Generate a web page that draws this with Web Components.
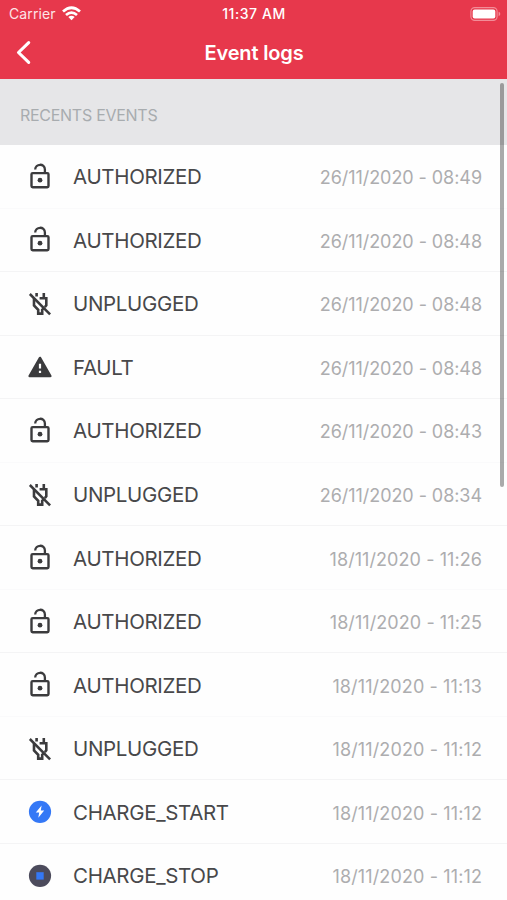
<!DOCTYPE html>
<html lang="en">
<head>
<meta charset="utf-8">
<title>Event logs</title>
<style>
body {
	margin: 0;
	height: 900px;
	overflow: hidden;
	background: #fefefe;
	font-family: Inter, "Liberation Sans", sans-serif;
}
event-row {
	--separator: #f4f4f5;
}
event-row:nth-of-type(1), event-row:nth-of-type(5), event-row:nth-of-type(7), event-row:nth-of-type(9) {
	--separator: #fafafb;
}
</style>
</head>
<body>
<event-screen>
	<status-bar slot="header" carrier="Carrier">11:37 AM</status-bar>
	<nav-bar slot="header">Event logs</nav-bar>
	<section-header>RECENTS EVENTS</section-header>
</event-screen>

<script>
// Icons share a 30x30 grid
const ICONS = {
	authorized: `
<rect x="6.5" y="11.1" width="17" height="14.2" rx="1.2" fill="none" stroke="#3b3b3d" stroke-width="2.4"/>
<path d="M10.2 7.6C10.2 1.2 19.9 1.2 19.9 7.4V11" fill="none" stroke="#3b3b3d" stroke-width="2.3"/>
<circle cx="15" cy="18.2" r="2.4" fill="#3b3b3d"/>`,
	unplugged: `
<path d="M4.8 5L25.1 25.3" fill="none" stroke="#3b3b3d" stroke-width="2.5"/>
<path d="M11.6 4V7.4M18.8 4V9.2M14.6 9.3H21.3V16.4L19.8 18.2M9 9.6V16.4L13.2 20.8V24.6H17.2V20.8L18.4 19.6" fill="none" stroke="#3b3b3d" stroke-width="2.6"/>`,
	fault: `
<path d="M15 5.9L25.4 24H4.6Z" fill="#3b3b3d" stroke="#3b3b3d" stroke-width="2.4" stroke-linejoin="round"/>
<path d="M15 11.8V16.5M15 18.7V21" stroke="#fff" stroke-width="2.2"/>`,
	start: `
<circle cx="15" cy="14.8" r="11.1" fill="#3478f6"/>
<path d="M16.6 8.6L10.8 15.6H14.2L13.3 20.8L19.2 13.6H15.8Z" fill="#fff"/>`,
	stop: `
<circle cx="15" cy="14.8" r="11.1" fill="#4c4b5c"/>
<rect x="11.3" y="11.2" width="7.4" height="7.4" fill="#3478f6"/>`,
};

const EVENTS = [
	["authorized", "AUTHORIZED", "26/11/2020 - 08:49"],
	["authorized", "AUTHORIZED", "26/11/2020 - 08:48"],
	["unplugged", "UNPLUGGED", "26/11/2020 - 08:48"],
	["fault", "FAULT", "26/11/2020 - 08:48"],
	["authorized", "AUTHORIZED", "26/11/2020 - 08:43"],
	["unplugged", "UNPLUGGED", "26/11/2020 - 08:34"],
	["authorized", "AUTHORIZED", "18/11/2020 - 11:26"],
	["authorized", "AUTHORIZED", "18/11/2020 - 11:25"],
	["authorized", "AUTHORIZED", "18/11/2020 - 11:13"],
	["unplugged", "UNPLUGGED", "18/11/2020 - 11:12"],
	["start", "CHARGE_START", "18/11/2020 - 11:12"],
	["stop", "CHARGE_STOP", "18/11/2020 - 11:12"],
];

class EventScreen extends HTMLElement{

	connectedCallback(){

		this.attachShadow({mode: "open"}).innerHTML = `
<style>
:host {
	display: block;
	position: relative;
	height: 900px;
	overflow: hidden;
}
header {
	height: 79px;
	background: #e7384c;
	color: #fff;
}
.scrollbar {
	position: absolute;
	top: 83px;
	right: 3px;
	width: 4px;
	height: 404px;
	border-radius: 2px;
	background: rgba(0, 0, 0, .33);
}
</style>
<header><slot name="header"></slot></header>
<slot></slot>
<div class="scrollbar"></div>
		`;

	}

}

class StatusBar extends HTMLElement{

	connectedCallback(){

		this.attachShadow({mode: "open"}).innerHTML = `
<style>
:host {
	display: grid;
	grid-template-columns: 1fr auto 1fr;
	align-items: center;
	height: 27px;
	padding: 0 6px 0 9px;
	font-size: 14px;
}
.carrier {
	display: flex;
	align-items: center;
	gap: 6px;
	color: #fde4e7;
	letter-spacing: .1px;
}
.time {
	font-size: 14px;
	font-weight: 500;
	letter-spacing: .55px;
	margin-right: 2px;
}
.battery {
	justify-self: end;
}
svg {
	display: block;
}
</style>
<div class="carrier">
	<span>${this.getAttribute("carrier")}</span>
	<svg width="19" height="15" viewBox="0 0 19 15" fill="none" stroke="#fff" stroke-width="2.7">
		<path d="M1 5.6Q9.5 -2.1 18 5.6M4 9Q9.5 4.2 15 9"/>
		<path d="M6.3 11Q9.5 8.5 12.7 11L9.5 14.3Z" fill="#fff" stroke="none"/>
	</svg>
</div>
<div class="time"><slot></slot></div>
<svg class="battery" width="31" height="14" viewBox="0 0 31 14">
	<rect x=".9" y=".6" width="26.2" height="12.8" rx="3.8" fill="none" stroke="#f28d98" stroke-width="1.1"/>
	<rect x="2.7" y="2.4" width="22.6" height="9.2" rx="2" fill="#fff"/>
	<path d="M28.6 4.8Q30.3 5.4 30.3 7T28.6 9.2Z" fill="#f28d98"/>
</svg>
		`;

	}

}

class NavBar extends HTMLElement{

	connectedCallback(){

		this.attachShadow({mode: "open"}).innerHTML = `
<style>
:host {
	display: grid;
	grid-template-columns: 1fr auto 1fr;
	align-items: center;
	height: 51px;
	padding: 0 14px 0 15px;
	font-size: 20px;
	font-weight: 600;
	letter-spacing: -.15px;
}
svg {
	display: block;
}
</style>
<svg width="18" height="26" viewBox="0 0 18 26">
	<path d="M13.7 2.6L3.5 12.5L13.7 22.4" fill="none" stroke="#fff" stroke-width="3.1" stroke-linecap="round" stroke-linejoin="round"/>
</svg>
<slot></slot>
		`;

	}

}

class SectionHeader extends HTMLElement{

	connectedCallback(){

		this.attachShadow({mode: "open"}).innerHTML = `
<style>
:host {
	display: flex;
	align-items: center;
	box-sizing: border-box;
	height: 66px;
	padding: 6px 20px 0;
	background: #e6e6e8;
	color: #a8acaf;
	font-size: 16px;
	letter-spacing: -.28px;
}
</style>
<slot></slot>
		`;

	}

}

class EventRow extends HTMLElement{

	connectedCallback(){

		const time = this.getAttribute("time");

		// Inter's "1" is narrow, so times with many of them are spaced a bit wider
		const ones = time.split("1").length - 1;
		const spacing = (ones - 2) * .045 - .06;

		this.attachShadow({mode: "open"}).innerHTML = `
<style>
:host {
	display: flex;
	align-items: center;
	box-sizing: border-box;
	height: 63.55px;
	padding: 1px 25px 0;
	border-bottom: 1px solid var(--separator, #f4f4f5);
}
svg {
	flex: none;
	margin-right: 18px;
}
.label {
	flex: 1;
	color: #48484a;
	font-size: 20.5px;
	letter-spacing: -.33px;
}
time {
	color: #adadaf;
	font-size: 18px;
	letter-spacing: ${spacing}px;
	padding-top: 2px;
}
</style>
<svg width="30" height="30" viewBox="0 0 30 30">${ICONS[this.getAttribute("icon")]}</svg>
<span class="label"><slot></slot></span>
<time>${time}</time>
		`;

	}

}

customElements.define("event-screen", EventScreen);
customElements.define("status-bar", StatusBar);
customElements.define("nav-bar", NavBar);
customElements.define("section-header", SectionHeader);
customElements.define("event-row", EventRow);

const screenElement = document.querySelector("event-screen");
for(const [icon, label, time] of EVENTS){
	const row = document.createElement("event-row");
	row.setAttribute("icon", icon);
	row.setAttribute("time", time);
	row.textContent = label;
	screenElement.appendChild(row);
}
</script>
</body>
</html>
